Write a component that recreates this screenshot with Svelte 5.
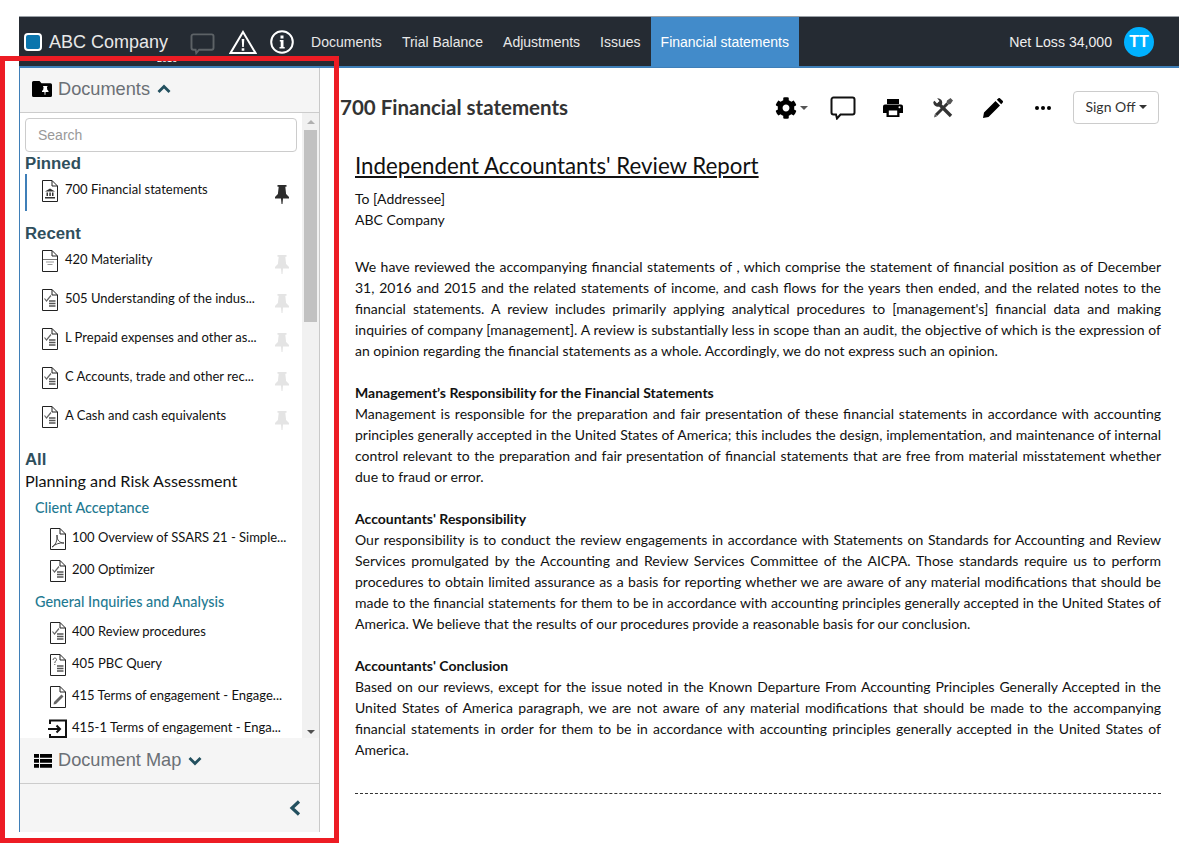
<script>
  const nav = ['Documents', 'Trial Balance', 'Adjustments', 'Issues', 'Financial statements'];
  const recent = [
    ['plain', '420 Materiality'],
    ['check', '505 Understanding of the indus...'],
    ['check', 'L Prepaid expenses and other as...'],
    ['check', 'C Accounts, trade and other rec...'],
    ['check', 'A Cash and cash equivalents']
  ];
  const groups = [
    { title: 'Client Acceptance', items: [
      ['pdf', '100 Overview of SSARS 21 - Simple...'],
      ['check', '200 Optimizer']
    ]},
    { title: 'General Inquiries and Analysis', items: [
      ['check', '400 Review procedures'],
      ['query', '405 PBC Query'],
      ['sign', '415 Terms of engagement - Engage...'],
      ['link', '415-1 Terms of engagement - Enga...']
    ]}
  ];
</script>

{#snippet docIcon(kind)}
  {#if kind === 'link'}
    <svg class="ficon" viewBox="0 0 22 22" width="22" height="22">
      <path d="M3 6V2.500h16v16.500H3V16" fill="none" stroke="#111" stroke-width="2"/>
      <path d="M1 11h12M9.500 7.500 13 11l-3.500 3.500" fill="none" stroke="#111" stroke-width="2"/>
    </svg>
  {:else}
    <svg class="ficon" viewBox="0 0 16 22" width="16" height="22">
      <path d="M.5.5h9.500l5.500 5.500v15.500h-15z" fill="#fff" stroke="#222" stroke-width="1"/>
      <path d="M10 .5v5.500h5.500" fill="none" stroke="#222" stroke-width="1"/>
      {#if kind === 'bank'}
        <path d="M8 8.500 13 11.500H3zM3 17h10v1.500H3zM4.500 12.500h1.500V16H4.500zM7.300 12.500h1.500V16H7.300zM10 12.500h1.500V16H10z" fill="#333"/>
      {:else if kind === 'plain'}
        <path d="M1 9.500h14" stroke="#777" stroke-width="1"/><path d="M4 12h8M5.500 14.500h5" stroke="#999" stroke-width="1"/>
      {:else if kind === 'check'}
        <path d="M2.500 9.500 4.500 12 9 6.500" fill="none" stroke="#666" stroke-width="1.200"/>
        <path d="M7 12h6.500M7 14.500h6.500M7 17h6.500" stroke="#555" stroke-width="1.300"/>
      {:else if kind === 'query'}
        <path d="M3 6c0-2.500 3.500-2.500 3.500-.5 0 1.500-1.700 1.500-1.700 3.500M4.800 10v1" fill="none" stroke="#555" stroke-width="1"/>
        <path d="M7 12h6.500M7 14.500h6.500M7 17h6.500" stroke="#555" stroke-width="1.300"/>
      {:else if kind === 'pdf'}
        <path d="M2 19c3.500-2 5.500-6 5-12-.3 5 2.500 8 7 8-4.500-.5-8.500 1-12 4z" fill="none" stroke="#444" stroke-width="1"/>
      {:else if kind === 'sign'}
        <path d="M3.500 18.500 4 16l7.500-7.500 2 2L6 18z" fill="#666"/>
      {/if}
    </svg>
  {/if}
{/snippet}

{#snippet pin(on)}
  <svg class="pin" class:on viewBox="0 0 14 19" width="14" height="19">
    <path d="M2.500 0h9v1.800H10.300l.8 7.200L14 12v1.500H8L7.500 19h-1L6 13.500H0V12l2.900-3 .8-7.200H2.500z"/>
  </svg>
{/snippet}

<div class="app">
  <header class="top">
    <span class="logo"></span>
    <span class="company">ABC Company<small>2016</small></span>
    <svg class="hicon chat" viewBox="0 0 26 24" width="25" height="23"><path d="M3.500 2.500h19a2 2 0 0 1 2 2v12a2 2 0 0 1-2 2H9.500l-3 3.500-.7-3.500H3.500a2 2 0 0 1-2-2v-12a2 2 0 0 1 2-2z" fill="none" stroke="#5d6266" stroke-width="2"/></svg>
    <svg class="hicon warn" viewBox="0 0 28 24" width="28" height="24"><path d="M14 2 26.500 23h-25z" fill="none" stroke="#fff" stroke-width="2"/><path d="M12.700 9h2.600l-.5 8h-1.600zM12.700 18.300h2.600v2.500h-2.600z" fill="#fff"/></svg>
    <svg class="hicon info" viewBox="0 0 24 24" width="24" height="24"><circle cx="12" cy="12" r="10.800" fill="none" stroke="#fff" stroke-width="2"/><path d="M10.500 5.500h3v3h-3zM9.800 10h3.700v7h1.200v1.500H9.500V17h1.200v-5.500H9.800z" fill="#fff"/></svg>
    <nav class="nav">
      {#each nav as n, i}
        <span class="navitem" class:active={i === 4}>{n}</span>
      {/each}
    </nav>
    <span class="loss">Net Loss 34,000</span>
    <span class="avatar">TT</span>
  </header>

  <div class="body">
    <aside class="side">
      <div class="sect">
        <svg viewBox="0 0 20 16" width="20" height="16"><path d="M0 1.500A1.500 1.500 0 0 1 1.500 0h6l2 2.200h9A1.500 1.500 0 0 1 20 3.700V14.500a1.500 1.500 0 0 1-1.500 1.500h-17A1.500 1.500 0 0 1 0 14.500z" fill="#000"/><path d="M11 5h4.500v.8h-.6l.4 3 1.200 1.300v.8H13.600l-.3 3h-.6l-.3-3H10v-.8l1.200-1.300.4-3H11z" fill="#fff"/></svg>
        <span class="secttext">Documents</span>
        <svg class="chev" viewBox="0 0 14 10" width="14" height="10"><path d="M1.500 8 7 2.500 12.500 8" fill="none" stroke="#23505f" stroke-width="2.800"/></svg>
      </div>
      <div class="listwrap">
        <div class="list">
          <input class="search" placeholder="Search" />
          <h4 class="h pinned">Pinned</h4>
          <div class="row pinrow">
            {@render docIcon('bank')}
            <span class="name">700 Financial statements</span>
            {@render pin(true)}
          </div>
          <h4 class="h recent">Recent</h4>
          {#each recent as [k, t]}
            <div class="row">
              {@render docIcon(k)}
              <span class="name">{t}</span>
              {@render pin(false)}
            </div>
          {/each}
          <h4 class="h all">All</h4>
          <div class="phase">Planning and Risk Assessment</div>
          {#each groups as g}
            <div class="gtitle">{g.title}</div>
            {#each g.items as [k, t]}
              <div class="row sub" class:linkrow={k === 'link'}>
                {@render docIcon(k)}
                <span class="name">{t}</span>
              </div>
            {/each}
          {/each}
        </div>
        <div class="sbar">
          <span class="arr up"></span>
          <span class="thumb"></span>
          <span class="arr down"></span>
        </div>
      </div>
      <div class="sect map">
        <svg viewBox="0 0 18 14" width="18" height="14"><path d="M0 0h5v3.800H0zM6 0h12v3.800H6zM0 5h5v3.800H0zM6 5h12v3.800H6zM0 10h5v3.800H0zM6 10h12v3.800H6z" fill="#000"/></svg>
        <span class="secttext">Document Map</span>
        <svg class="chev" viewBox="0 0 14 10" width="14" height="10"><path d="M1.500 2 7 7.500 12.500 2" fill="none" stroke="#23505f" stroke-width="2.800"/></svg>
      </div>
      <div class="foot">
        <svg viewBox="0 0 12 16" width="12" height="16"><path d="M10 1.500 3 8l7 6.500" fill="none" stroke="#23505f" stroke-width="3.200"/></svg>
      </div>
    </aside>

    <main class="main">
      <div class="titlebar">
        <h2>700 Financial statements</h2>
        <div class="tools">
          <span class="tool gear">
            <svg viewBox="0 0 512 512" width="22" height="22"><path d="M487.400 315.700l-42.600-24.600c4.300-23.200 4.300-47 0-70.200l42.600-24.600c4.900-2.800 7.100-8.600 5.500-14-11.100-35.600-30-67.800-54.700-94.600-3.800-4.100-10-5.100-14.800-2.300L380.800 110c-17.900-15.400-38.500-27.300-60.800-35.100V25.800c0-5.600-3.900-10.500-9.400-11.700-36.700-8.200-74.300-7.800-109.200 0-5.500 1.200-9.400 6.100-9.400 11.700V75c-22.200 7.900-42.800 19.800-60.800 35.100L88.700 85.500c-4.900-2.800-11-1.900-14.800 2.300-24.700 26.700-43.600 58.900-54.700 94.600-1.700 5.400.6 11.200 5.500 14L67.300 221c-4.300 23.200-4.300 47 0 70.200l-42.600 24.600c-4.900 2.800-7.100 8.600-5.500 14 11.100 35.600 30 67.800 54.700 94.600 3.800 4.100 10 5.100 14.800 2.300l42.600-24.600c17.900 15.400 38.500 27.300 60.800 35.100v49.200c0 5.600 3.900 10.500 9.400 11.700 36.700 8.200 74.300 7.800 109.200 0 5.500-1.200 9.400-6.100 9.400-11.700v-49.200c22.200-7.900 42.800-19.800 60.800-35.100l42.600 24.600c4.900 2.800 11 1.900 14.800-2.300 24.700-26.700 43.600-58.900 54.700-94.600 1.500-5.500-.7-11.300-5.600-14.100zM256 336c-44.100 0-80-35.900-80-80s35.900-80 80-80 80 35.900 80 80-35.900 80-80 80z"/></svg>
            <i class="caret"></i>
          </span>
          <span class="tool">
            <svg viewBox="0 0 26 24" width="26" height="24"><path d="M3.500 1.500h19a2 2 0 0 1 2 2v13a2 2 0 0 1-2 2H10.500l-3.500 4-1-4H3.500a2 2 0 0 1-2-2v-13a2 2 0 0 1 2-2z" fill="none" stroke="#111" stroke-width="2"/></svg>
          </span>
          <span class="tool">
            <svg viewBox="0 0 20 18" width="20" height="18"><path d="M4 0h12v5H4zM2 5.500h16a2 2 0 0 1 2 2V14h-3.500v4h-13v-4H0V7.500a2 2 0 0 1 2-2z" fill="#000"/><path d="M5.800 11.500h8.400v4.700H5.800z" fill="#fff"/><circle cx="16.500" cy="8.300" r="1" fill="#fff"/></svg>
          </span>
          <span class="tool">
            <svg viewBox="0 0 20 20" width="20" height="20"><path d="M5 5 18 18" stroke="#333" stroke-width="3.400"/><path d="M14.500 5.500 3 17" stroke="#333" stroke-width="3"/><path d="M.3 4A4.500 4.500 0 0 0 6 8.500L9 6A4.500 4.500 0 0 0 4.200.2L6.500 3 4 5.500 1.500 2.800z" fill="#333"/><path d="M14 2.500 17.500 0 20 2.500 17.500 6 15.500 6.500 13.500 4.500zM1 19.500l.8-3.500 2.300 2.300z" fill="#555"/></svg>
          </span>
          <span class="tool">
            <svg viewBox="0 0 20 20" width="20" height="20"><path d="M0 20l1-5.500L12.500 3l4.500 4.500L5.500 19zM13.800 1.800 15.200.4a1.500 1.500 0 0 1 2 0l2.400 2.400a1.500 1.500 0 0 1 0 2L18.200 6.200z" fill="#000"/></svg>
          </span>
          <span class="tool">
            <svg viewBox="0 0 18 6" width="18" height="6"><circle cx="3" cy="3" r="2"/><circle cx="9" cy="3" r="2"/><circle cx="15" cy="3" r="2"/></svg>
          </span>
          <span class="signoff">Sign Off<i class="caret dark"></i></span>
        </div>
      </div>
      <article class="doc">
        <h1>Independent Accountants' Review Report</h1>
        <p class="addr">To [Addressee]<br />ABC Company</p>
        <p>We have reviewed the accompanying financial statements of , which comprise the statement of financial position as of December 31, 2016 and 2015 and the related statements of income, and cash flows for the years then ended, and the related notes to the financial statements. A review includes primarily applying analytical procedures to [management's] financial data and making inquiries of company [management]. A review is substantially less in scope than an audit, the objective of which is the expression of an opinion regarding the financial statements as a whole. Accordingly, we do not express such an opinion.</p>
        <p><b>Management’s Responsibility for the Financial Statements</b><br />Management is responsible for the preparation and fair presentation of these financial statements in accordance with accounting principles generally accepted in the United States of America; this includes the design, implementation, and maintenance of internal control relevant to the preparation and fair presentation of financial statements that are free from material misstatement whether due to fraud or error.</p>
        <p><b>Accountants' Responsibility</b><br />Our responsibility is to conduct the review engagements in accordance with Statements on Standards for Accounting and Review Services promulgated by the Accounting and Review Services Committee of the AICPA. Those standards require us to perform procedures to obtain limited assurance as a basis for reporting whether we are aware of any material modifications that should be made to the financial statements for them to be in accordance with accounting principles generally accepted in the United States of America. We believe that the results of our procedures provide a reasonable basis for our conclusion.</p>
        <p><b>Accountants' Conclusion</b><br />Based on our reviews, except for the issue noted in the Known Departure From Accounting Principles Generally Accepted in the United States of America paragraph, we are not aware of any material modifications that should be made to the accompanying financial statements in order for them to be in accordance with accounting principles generally accepted in the United States of America.</p>
        <hr />
      </article>
    </main>
  </div>
  <div class="annot"></div>
</div>

<style>
  :global(body) { background: #fff; font-family: "Lato", sans-serif; color: #111; }
  .app { width: 1160px; height: 816px; margin: 16px 0 0 19px; display: flex; flex-direction: column; overflow: visible; }

  .top { height: 52px; flex: none; box-sizing: border-box; background: #252b33; border-top: 1px solid #9aa0a6; border-bottom: 2px solid #3f7fb8; display: flex; align-items: center; font-family: "Liberation Sans", sans-serif; color: #f0f0f0; }
  .logo { width: 14px; height: 14px; margin-left: 5px; border: 2px solid #fff; border-radius: 4px; background: #0a75ad; flex: none; }
  .company { position: relative; font-size: 18px; margin: 1px 0 0 7px; color: #e8e8e8; white-space: nowrap; }
  .company small { position: absolute; left: 108px; top: 22px; font-size: 9px; color: #fff; }
  .hicon { flex: none; }
  .chat { margin-left: 22px; margin-top: 4px; }
  .warn { margin-left: 14px; }
  .info { margin-left: 13px; }
  .nav { display: flex; align-self: stretch; margin-left: 7px; }
  .navitem { display: flex; align-items: center; padding: 0 10px; font-size: 14px; color: #e8e8e8; white-space: nowrap; margin-bottom: -1px; }
  .navitem.active { background: #428bca; color: #fff; }
  .loss { margin-left: auto; font-size: 14.1px; color: #eee; }
  .avatar { width: 30px; height: 30px; margin: 0 25px 0 12px; border-radius: 50%; background: #00b1ff; color: #fff; font-weight: 700; font-size: 16px; display: flex; align-items: center; justify-content: center; }

  .body { flex: 1; display: flex; min-height: 0; }
  .side { width: 301px; flex: none; box-sizing: border-box; border-left: 1px solid #3f7fb8; border-right: 1px solid #c9c9c9; display: flex; flex-direction: column; background: #f5f5f5; }
  .sect { height: 45px; flex: none; box-sizing: border-box; display: flex; align-items: center; padding: 0 0 2px 12px; border-bottom: 1px solid #ccc; background: #f5f5f5; }
  .sect.map { height: 46px; padding: 0 0 0 14px; }
  .secttext { font-family: "Liberation Sans", sans-serif; font-size: 18.2px; color: #6b7075; margin-left: 6px; }
  .chev { margin-left: 7px; }
  .listwrap { flex: 1; min-height: 0; display: flex; background: #fff; }
  .list { flex: 1; min-width: 0; padding: 5px 0 0 5px; overflow: hidden; }
  .search { display: block; box-sizing: border-box; width: 272px; height: 34px; border: 1px solid #ccc; border-radius: 4px; padding: 0 12px; font: 14px "Liberation Sans", sans-serif; color: #555; background: #fff; outline: none; }
  .search::placeholder { color: #999; opacity: 1; }
  .h { margin: 0; font: 700 16.8px/20px "Liberation Sans", sans-serif; color: #2f4f5d; }
  .h.pinned { margin-top: 2px; }
  .h.recent { margin-top: 13px; margin-bottom: 6px; }
  .h.all { margin-top: 5px; }
  .row { height: 39px; display: flex; align-items: flex-start; padding: 0 0 0 17px; box-sizing: border-box; font-size: 13px; color: #111; }
  .row .name { flex: none; width: 195px; margin-left: 7px; line-height: 18px; white-space: nowrap; }
  .pinrow { height: 37px; padding-left: 15px; padding-top: 6px; border-left: 2px solid #3f7fb8; }
  .ficon { flex: none; }
  .pin { flex: none; margin: 5px 0 0 15px; fill: #e4e4e4; }
  .pin.on { fill: #2d2d2d; }
  .phase { font-size: 16.2px; line-height: 24px; color: #111; margin-top: -1px; }
  .gtitle { font-size: 14.4px; font-weight: 500; line-height: 20px; color: #1f7a92; margin: 5px 0 10px 10px; }
  .row.sub { height: 32px; padding-left: 25px; }
  .row.sub .name { width: 218px; margin-left: 6px; }
  .row.sub + .gtitle { margin-top: 0; }
  .row.linkrow { padding-left: 22px; }
  .row.linkrow .name { margin-left: 3px; }
  .sbar { width: 17px; flex: none; background: #f1f1f1; display: flex; flex-direction: column; align-items: center; position: relative; }
  .arr { width: 0; height: 0; border-left: 4px solid transparent; border-right: 4px solid transparent; flex: none; }
  .arr.up { border-bottom: 4px solid #b0b0b0; margin-top: 7px; }
  .arr.down { border-top: 4px solid #505050; margin-top: auto; margin-bottom: 4px; }
  .thumb { width: 13px; height: 192px; background: #c1c1c1; margin-top: 6px; }
  .foot { height: 48px; flex: none; display: flex; align-items: center; justify-content: flex-end; padding-right: 18px; background: #f5f5f5; }

  .main { flex: 1; min-width: 0; }
  .titlebar { height: 56px; box-sizing: border-box; padding: 23px 20px 0 20px; display: flex; align-items: flex-start; justify-content: space-between; }
  .titlebar h2 { margin: 0; font: 700 20.5px/33px "Lato", sans-serif; color: #333; }
  .tools { display: flex; align-items: center; height: 33px; }
  .tool { width: 50px; height: 33px; display: flex; align-items: center; justify-content: center; }
  .tool.gear { position: relative; }
  .tool.gear svg { margin-right: 14px; }
  .caret { display: inline-block; width: 0; height: 0; border-left: 4px solid transparent; border-right: 4px solid transparent; border-top: 4px solid #555; position: absolute; left: 32px; top: 15px; }
  .caret.dark { position: static; margin-left: 3px; border-top-color: #333; }
  .signoff { margin-left: 5px; height: 33px; box-sizing: border-box; width: 86px; padding-bottom: 2px; border: 1px solid #ccc; border-radius: 4px; display: flex; align-items: center; justify-content: center; font-size: 14px; color: #333; }

  .doc { padding: 0 18px 0 35px; font-size: 14px; line-height: 21px; color: #111; text-align: justify; }
  .doc h1 { margin: 26px 0 6px; font-size: 22.3px; font-weight: 400; line-height: 32px; text-decoration: underline; text-align: left; color: #111; }
  .doc p { margin: 0 0 21px; }
  .doc p.addr { margin-bottom: 26px; text-align: left; }
  .doc b { font-weight: 700; }
  .doc hr { border: 0; border-top: 1px dashed #333; margin: 33px 0 0; }

  .annot { position: absolute; left: 0; top: 56px; width: 339px; height: 787px; box-sizing: border-box; border: 5px solid #ed1c24; pointer-events: none; }
</style>
